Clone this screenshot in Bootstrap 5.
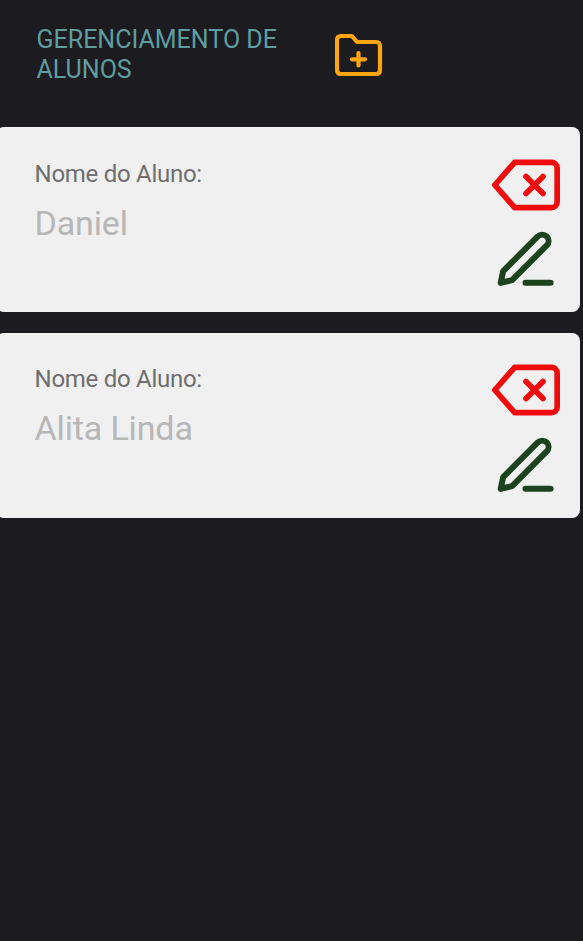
<!DOCTYPE html>
<html lang="pt-BR">
<head>
<meta charset="utf-8">
<meta name="viewport" content="width=device-width, initial-scale=1">
<title>Gerenciamento de Alunos</title>
<link rel="stylesheet" href="https://cdn.jsdelivr.net/npm/bootstrap@5.3.0/dist/css/bootstrap.min.css">
<style>
body{background:#1c1b1f;font-family:Roboto,sans-serif;min-height:100vh;overflow-x:hidden}
svg{display:block;fill:none;stroke-linecap:round;stroke-linejoin:round}
.topbar{height:127px;padding:25px 0 0 36.5px}
.page-title{width:298.5px;font-size:25px;line-height:29.5px;font-weight:400;color:#5f9ea0;padding-right:40px}
.add-icon{margin-top:8px;stroke:#ffa510;stroke-width:4.2}
.student-list{gap:20.5px;margin:0 3px 0 -4px}
.student{height:185.2px;background:#f0f0f0;border-radius:8px;padding:0 20px 0 38.6px}
.field-label{font-size:24px;line-height:28px;letter-spacing:-.28px;color:#6e6e6e;margin-top:32.6px}
.student-name{font-size:34px;line-height:40px;letter-spacing:-.15px;color:#b7b7b7;margin-top:15px}
.actions{padding-top:23.7px;width:68px}
.delete-icon{stroke:#f00c0c;stroke-width:2}
.edit-icon{stroke:#1d421e;stroke-width:2.15;margin-top:8.8px}
.btn-plain{padding:0;border:0;border-radius:0;line-height:1}
</style>
</head>
<body>
<header class="topbar d-flex align-items-start">
  <h1 class="page-title mb-0">GERENCIAMENTO DE ALUNOS</h1>
  <button class="btn btn-plain" type="button" aria-label="Adicionar">
    <svg class="add-icon" width="48" height="44" viewBox="0 0 48 44"><path d="M6 3H17L22 9H41Q45 9 45 13V37Q45 41 41 41H6Q2 41 2 37V7Q2 3 6 3ZM23.5 20V32.5M17 26.3H30"/></svg>
  </button>
</header>
<main class="student-list d-flex flex-column">
  <section class="student d-flex justify-content-between">
    <div>
      <div class="field-label">Nome do Aluno:</div>
      <div class="student-name">Daniel</div>
    </div>
    <div class="actions d-flex flex-column align-items-start">
      <button class="btn btn-plain" type="button" aria-label="Excluir"><svg class="delete-icon" width="68" height="68" viewBox="0 0 24 24"><path d="M21 4H8l-7 8 7 8h13a2 2 0 0 0 2-2V6a2 2 0 0 0-2-2zM18 9l-6 6M12 9l6 6"/></svg></button>
      <button class="btn btn-plain" type="button" aria-label="Editar"><svg class="edit-icon" width="67" height="67" viewBox="0 0 24 24"><path d="M12 20h9M16.4 3.4a2.2 2.2 0 0 1 3.2 3.2L7.2 19l-4.1 1 .9-4.2z"/></svg></button>
    </div>
  </section>
  <section class="student d-flex justify-content-between">
    <div>
      <div class="field-label">Nome do Aluno:</div>
      <div class="student-name">Alita Linda</div>
    </div>
    <div class="actions d-flex flex-column align-items-start">
      <button class="btn btn-plain" type="button" aria-label="Excluir"><svg class="delete-icon" width="68" height="68" viewBox="0 0 24 24"><path d="M21 4H8l-7 8 7 8h13a2 2 0 0 0 2-2V6a2 2 0 0 0-2-2zM18 9l-6 6M12 9l6 6"/></svg></button>
      <button class="btn btn-plain" type="button" aria-label="Editar"><svg class="edit-icon" width="67" height="67" viewBox="0 0 24 24"><path d="M12 20h9M16.4 3.4a2.2 2.2 0 0 1 3.2 3.2L7.2 19l-4.1 1 .9-4.2z"/></svg></button>
    </div>
  </section>
</main>
<script src="https://cdn.jsdelivr.net/npm/bootstrap@5.3.0/dist/js/bootstrap.bundle.min.js"></script>
</body>
</html>
